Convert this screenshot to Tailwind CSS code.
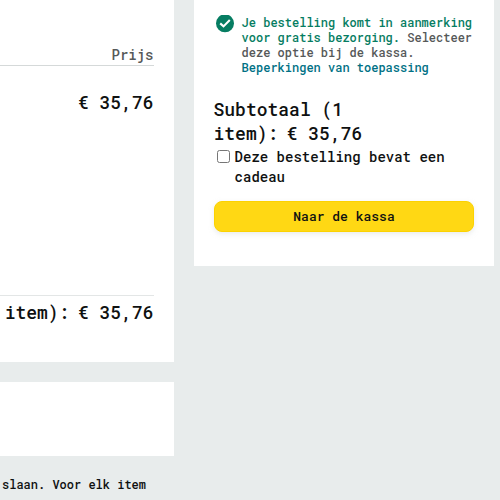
<!DOCTYPE html>
<html lang="nl">
<head>
<meta charset="utf-8">
<title>Winkelwagen</title>
<script src="https://cdn.jsdelivr.net/npm/@tailwindcss/browser@4"></script>
</head>
<body class="h-[500px] w-[500px] overflow-hidden bg-[#e8ecec] font-['Roboto_Mono','DejaVu_Sans_Mono',monospace] font-medium text-[#0f1111]">
<div class="flex h-[500px] items-start gap-5">
  <main class="w-[174px] shrink-0">
    <section class="flex h-[362px] flex-col bg-white pr-5">
      <div class="flex h-[66px] items-end justify-end border-b border-[#d5d9d9] pr-[0.5px] text-sm leading-5 text-[#565959]">Prijs</div>
      <div class="mt-6 h-6 whitespace-nowrap pr-[0.5px] text-right text-[18px] leading-6">€ 35,76</div>
      <div class="mt-[181px] flex justify-end whitespace-pre border-t border-[#e3e6e6] pr-[0.5px] pt-1 text-[18px] leading-6"><span>item):</span><span class="text-sm leading-6"> </span><span>€ 35,76</span></div>
    </section>
    <section class="mt-5 h-[74px] bg-white"></section>
    <p class="mt-5 whitespace-nowrap pl-[2px] text-xs leading-4">slaan. Voor elk item</p>
  </main>
  <aside class="h-[266px] w-[300px] shrink-0 bg-white px-5 pt-[14px]">
    <div class="flex gap-[6.6px] pl-[2px]">
      <svg class="mt-px h-[18px] w-[19px] shrink-0" viewBox="0 0 19 18"><circle cx="9" cy="8.3" r="9" fill="#067d62"/><path d="M4.2 8.4 7.5 11.4 13.8 5" fill="none" stroke="#fff" stroke-width="2.1"/></svg>
      <p class="mt-px whitespace-nowrap text-xs leading-[15px] text-[#565959]"><span class="text-[#067d62]">Je bestelling komt in aanmerking<br>voor gratis bezorging.</span> Selecteer<br>deze optie bij de kassa.<br><a class="text-[#007185]">Beperkingen van toepassing</a></p>
    </div>
    <div class="-ml-[0.5px] mt-[22px] whitespace-nowrap text-[18px] leading-6">Subtotaal (1<br>item):<span class="text-sm leading-none"> </span>€ 35,76</div>
    <label class="mt-[2px] flex text-sm leading-5"><input type="checkbox" class="ml-[3px] mt-[3px] mr-[4.6px] h-[13px] w-[13px] shrink-0"><span class="whitespace-nowrap">Deze bestelling bevat een<br>cadeau</span></label>
    <button class="mt-[14px] h-[31px] w-full rounded-lg border border-[#fcd200] bg-[#ffd814] text-[13px] leading-[29px] shadow-[0_2px_5px_0_rgba(213,217,217,0.5)]">Naar de kassa</button>
  </aside>
</div>
</body>
</html>
